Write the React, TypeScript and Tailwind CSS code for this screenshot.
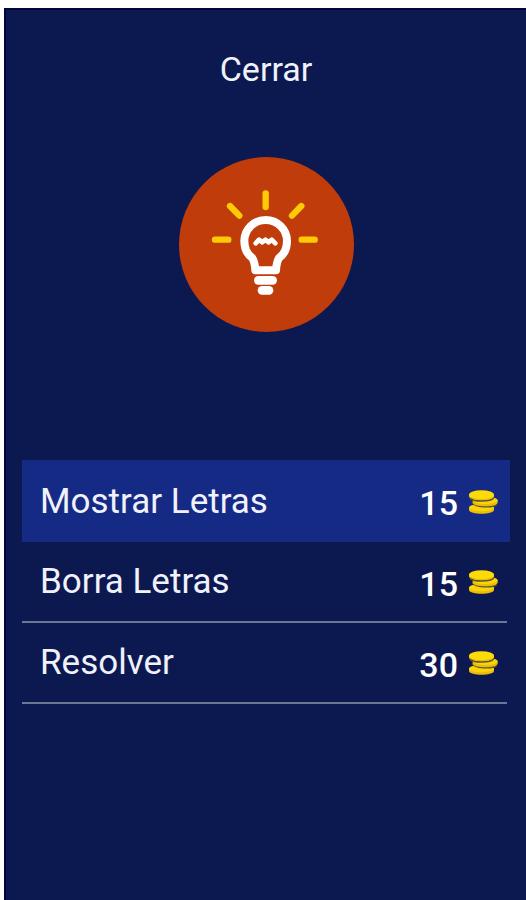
function BulbIcon() {
  return (
    <svg viewBox="27 22 525 525" className="size-[175px]" fill="none" strokeLinecap="round" strokeLinejoin="round" aria-hidden="true">
      <circle cx="289.5" cy="284.5" r="262.5" fill="#c03c0a" />
      <g stroke="#fccb05" strokeWidth="19">
        <path d="M287 131V172" />
        <path d="M180 169L208 198" />
        <path d="M394 169L366 198" />
        <path d="M135 270H175" />
        <path d="M395 270H434" />
      </g>
      <g stroke="#fff">
        <path
          d="M256 362C255 345 253 335 247 325C233 315 223 297 223 274C223 239 252 211 287 211C322 211 351 239 351 274C351 297 341 315 327 325C321 335 319 345 318 362Z"
          strokeWidth="24"
        />
        <path d="M257 281L267 270L277 278L286 270L296 278L305 270L316 281" strokeWidth="14" />
        <path d="M265 392H308" strokeWidth="26" />
        <path d="M276 422H297" strokeWidth="26" />
      </g>
    </svg>
  );
}

function CoinsIcon() {
  return (
    <svg viewBox="180 120 87 75" className="h-[25px] w-[29px]" aria-hidden="true">
      <path d="M180 173V180C182 195 253 195 255 180V173Z" fill="#e9bd08" />
      <ellipse cx="217.5" cy="173" rx="37.5" ry="11" fill="#fbd509" />
      <path d="M190 157C196 172 250 174 263 164" fill="none" stroke="#5b5530" strokeWidth="5" />
      <path d="M191 151V158C193 172 264 172 266 158V151Z" fill="#e9bd08" />
      <ellipse cx="228.5" cy="151" rx="37.5" ry="11" fill="#fbd509" />
      <path d="M183 144C190 156 245 156 254 144" fill="none" stroke="#5b5530" strokeWidth="5" />
      <path d="M180 134V139C182 154 253 154 255 139V134Z" fill="#e9bd08" />
      <ellipse cx="217.5" cy="134" rx="37.5" ry="13" fill="#fddb08" />
    </svg>
  );
}

const hints = [
  { label: "Mostrar Letras", cost: 15, active: true },
  { label: "Borra Letras", cost: 15, active: false },
  { label: "Resolver", cost: 30, active: false },
];

export default function App() {
  return (
    <div className="min-h-screen bg-white pt-2 pl-1 font-['Roboto','Liberation_Sans',sans-serif] text-[#f0f1fa] flex flex-col">
      <main className="flex flex-1 flex-col items-center border-t-2 border-l-2 border-[#03033f] bg-[#0c1850] pt-[39px]">
        <button type="button" className="text-[34px] leading-10">
          Cerrar
        </button>
        <div className="mt-[68px]">
          <BulbIcon />
        </div>
        <ul className="mt-32 w-full pr-4 pl-4">
          {hints.map((hint) => (
            <li key={hint.label}>
              <button
                type="button"
                className={
                  hint.active
                    ? "flex h-[82px] w-full items-center justify-between bg-[#152a85] pr-3 pl-[18px]"
                    : "flex h-[81px] w-[calc(100%-3px)] items-center justify-between border-b-2 border-[#6c7893] pr-[9px] pl-[18px]"
                }
              >
                <span className="pt-px text-[35px] leading-10">{hint.label}</span>
                <span className="flex items-center gap-[11px]">
                  <span className="pt-1 text-[34px] leading-10 font-medium text-white">{hint.cost}</span>
                  <span className="pt-0.5">
                    <CoinsIcon />
                  </span>
                </span>
              </button>
            </li>
          ))}
        </ul>
      </main>
    </div>
  );
}
